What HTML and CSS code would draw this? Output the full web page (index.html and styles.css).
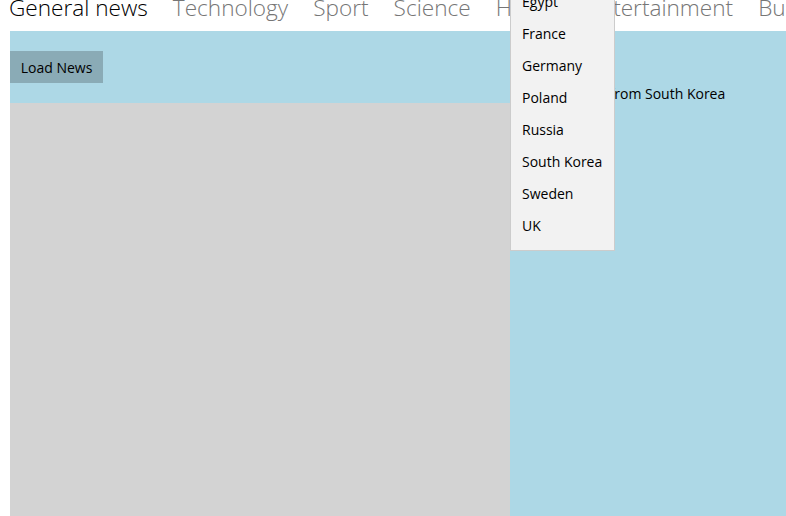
FILE: index.html
```html
<!DOCTYPE html>
<html>
<head>
<meta charset="utf-8">
<link rel="stylesheet" href="styles.css">
</head>
<body>
<div class="app">
  <nav class="pivot">
    <span class="tab active">General news</span>
    <span class="tab">Technology</span>
    <span class="tab">Sport</span>
    <span class="tab">Science</span>
    <span class="tab">Health</span>
    <span class="tab">Entertainment</span>
    <span class="tab">Business</span>
  </nav>
  <main class="panel">
    <section class="left">
      <button class="load">Load News</button>
      <div class="results"></div>
    </section>
    <section class="right">
      <p class="caption">News from South Korea</p>
    </section>
  </main>
  <ul class="dropdown">
    <li>Egypt</li>
    <li>France</li>
    <li>Germany</li>
    <li>Poland</li>
    <li>Russia</li>
    <li>South Korea</li>
    <li>Sweden</li>
    <li>UK</li>
  </ul>
</div>
</body>
</html>
```
FILE: styles.css
```css
html, body {
  margin: 0;
  padding: 0;
  background: #ffffff;
  font-family: "Open Sans", "Noto Sans", sans-serif;
}
.app {
  width: 786px;
  height: 516px;
  overflow: hidden;
  position: relative;
  display: flex;
  flex-direction: column;
}
.pivot {
  height: 31px;
  display: flex;
  gap: 25px;
  padding-left: 9px;
  white-space: nowrap;
  overflow: hidden;
  font-weight: 300;
  font-size: 22.6px;
  line-height: 24px;
  color: #767676;
}
.tab {
  margin-top: -4px;
}
.tab.active {
  color: #000000;
}
.panel {
  flex: 1;
  margin-left: 10px;
  background: #add8e6;
  display: grid;
  grid-template-columns: 500px 1fr;
}
.left {
  display: flex;
  flex-direction: column;
  padding-top: 20px;
  gap: 20px;
}
.load {
  align-self: flex-start;
  width: 93px;
  height: 32px;
  border: none;
  background: #8aabb6;
  font-family: inherit;
  font-size: 14px;
  color: #000;
  padding: 0;
}
.results {
  flex: 1;
  background: #d3d3d3;
}
.right {
  padding-top: 53px;
}
.caption {
  margin: 0;
  padding-left: 60px;
  font-size: 14px;
  color: #000;
}
.dropdown {
  position: absolute;
  left: 510px;
  top: -15px;
  width: 103px;
  margin: 0;
  padding: 0 0 8px 0;
  list-style: none;
  background: #f2f2f2;
  border: 1px solid #cccccc;
  font-size: 14px;
  color: #000;
}
.dropdown li {
  height: 32px;
  line-height: 32px;
  padding-left: 11px;
}
```
